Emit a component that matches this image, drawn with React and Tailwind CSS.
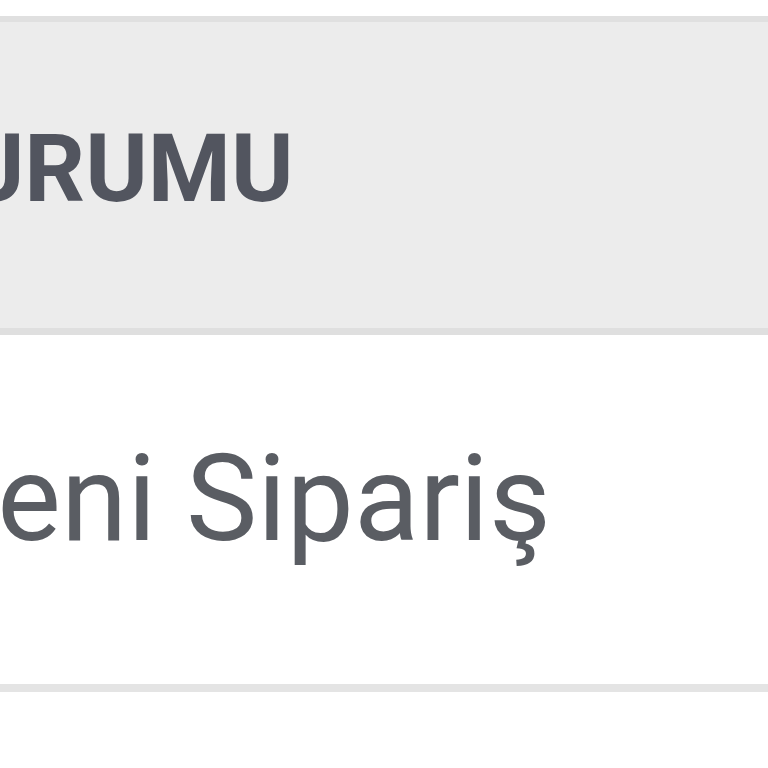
export default function App() {
  return (
    <div className="w-[768px] h-[768px] bg-white overflow-hidden pt-[16px]" style={{ fontFamily: "Roboto, 'Noto Sans', sans-serif" }}>
      <div className="border-t-[6px] border-[#e0e0e0]">
        <div className="h-[313px] bg-[#ececec] flex items-center border-b-[7px] border-[#dfdfdf]">
          <span className="ml-[-100px] text-[95px] leading-none font-bold text-[#52555f] whitespace-nowrap pb-[14px]">DURUMU</span>
        </div>
        <div className="h-[357px] bg-white flex items-center border-b-[8px] border-[#e4e4e4]">
          <span className="ml-[-71px] text-[120px] leading-none text-[#5a5d63] whitespace-nowrap pb-[22px]">Yeni Sipariş</span>
        </div>
      </div>
    </div>
  );
}
